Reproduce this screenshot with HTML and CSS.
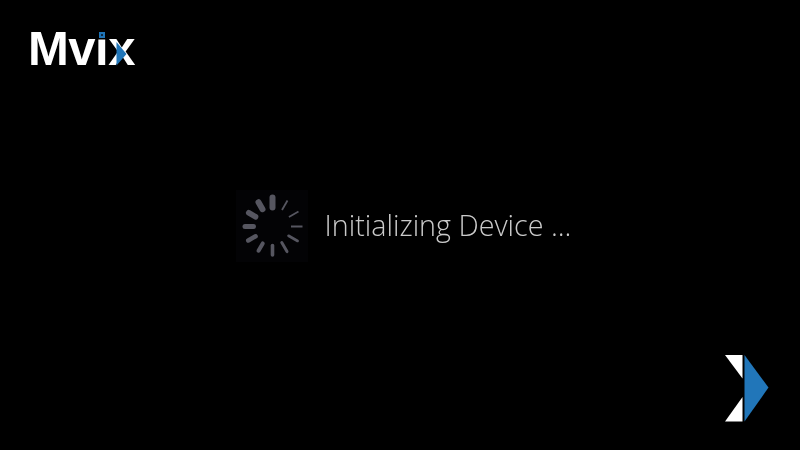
FILE: index.html
```html
<!DOCTYPE html>
<html lang="en">
<head>
<meta charset="utf-8">
<title>Initializing Device</title>
<link rel="stylesheet" href="styles.css">
</head>
<body>
<div class="screen">
  <header class="logo">
    <span class="wordmark">Mvix</span>
    <svg class="logo-marks" width="112" height="40" viewBox="30 28 112 40" aria-hidden="true">
      <rect x="97" y="28" width="10" height="11.500" fill="#000"/>
      <rect x="99" y="32" width="6" height="6" fill="#1f75b8"/>
      <rect x="101" y="34" width="2" height="2" fill="#0b2a44"/>
      <polygon points="116.500,42 126.500,54 116.500,65.500" fill="#1f75b8"/>
    </svg>
  </header>
  <main class="status">
    <div class="spinner-box">
      <svg class="spinner" width="72" height="72" viewBox="-36.500 -36.500 72 72" aria-hidden="true">
        <g stroke="#565660" stroke-linecap="round">
          <line x1="0" y1="-19" x2="0" y2="-29" stroke-width="6"/>
          <line x1="0" y1="-19" x2="0" y2="-30" stroke-width="1.800" transform="rotate(30)" stroke-linecap="butt"/>
          <line x1="0" y1="-19" x2="0" y2="-30" stroke-width="1.800" transform="rotate(60)" stroke-linecap="butt"/>
          <line x1="0" y1="-18.500" x2="0" y2="-30" stroke-width="2" transform="rotate(90)" stroke-linecap="butt"/>
          <line x1="0" y1="-18.500" x2="0" y2="-29" stroke-width="2.600" transform="rotate(120)"/>
          <line x1="0" y1="-18.500" x2="0" y2="-29" stroke-width="3" transform="rotate(150)"/>
          <line x1="0" y1="-19" x2="0" y2="-28.500" stroke-width="3.600" transform="rotate(180)"/>
          <line x1="0" y1="-19.500" x2="0" y2="-28" stroke-width="4" transform="rotate(210)"/>
          <line x1="0" y1="-19.500" x2="0" y2="-28" stroke-width="4.500" transform="rotate(240)"/>
          <line x1="0" y1="-19" x2="0" y2="-27.500" stroke-width="5" transform="rotate(270)"/>
          <line x1="0" y1="-19.500" x2="0" y2="-27.500" stroke-width="5.500" transform="rotate(300)"/>
          <line x1="0" y1="-20" x2="0" y2="-28" stroke-width="6" transform="rotate(330)"/>
        </g>
      </svg>
    </div>
    <span class="status-text">Initializing Device ...</span>
  </main>
  <footer class="mark">
    <svg width="44" height="67" viewBox="0 0 44 67" aria-hidden="true">
      <polygon points="0,0 17.500,0 17.500,23.500" fill="#fff"/>
      <polygon points="17.500,42 17.500,66.500 0,66.500" fill="#fff"/>
      <polygon points="19.500,0 43.500,32.500 19.500,66.500" fill="#2176b9"/>
    </svg>
  </footer>
</div>
</body>
</html>
```
FILE: styles.css
```css
html, body {
  margin: 0;
  padding: 0;
  background: #000;
}
.screen {
  width: 800px;
  height: 450px;
  overflow: hidden;
  background: #000;
  display: grid;
  grid-template-rows: 190px 72px 1fr;
}
.logo {
  position: relative;
  padding: 20px 0 0 28px;
  height: 56px;
}
.wordmark {
  font-family: "Liberation Sans", Arial, sans-serif;
  font-weight: 700;
  font-size: 49px;
  line-height: 56px;
  color: #fff;
  letter-spacing: -0.5px;
}
.logo-marks {
  position: absolute;
  left: 30px;
  top: 28px;
}
.status {
  display: flex;
  align-items: center;
  padding-left: 236px;
  gap: 16.500px;
}
.spinner-box {
  width: 72px;
  height: 72px;
  background: #030305;
}
.spinner {
  display: block;
}
.status-text {
  font-family: "Open Sans", sans-serif;
  font-weight: 300;
  font-size: 28.700px;
  line-height: 36px;
  color: #cacaca;
  margin-top: -3px;
  will-change: opacity;
}
.mark {
  display: flex;
  justify-content: flex-end;
  padding: 93px 31px 0 0;
}
.mark svg {
  display: block;
}
```
